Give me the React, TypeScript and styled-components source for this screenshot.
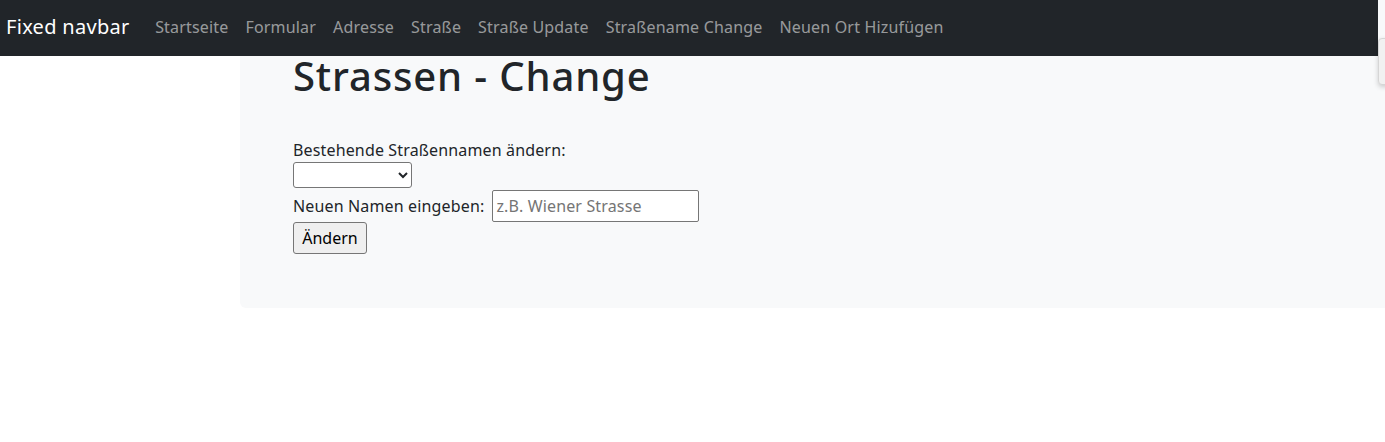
import React from "react";
import styled, { createGlobalStyle } from "styled-components";

const GlobalStyle = createGlobalStyle`
  html, body {
    margin: 0;
    padding: 0;
    overflow: hidden;
    background: #ffffff;
  }
  body {
    font-family: "Noto Sans", "Open Sans", sans-serif;
    font-size: 16px;
    line-height: 1.5;
    color: #212529;
  }
  *, *::before, *::after { box-sizing: border-box; }
`;

const Page = styled.div`
  position: relative;
  width: 1385px;
  height: 442px;
`;

const Navbar = styled.nav`
  position: fixed;
  top: 0;
  left: 0;
  right: 7px;
  height: 56px;
  z-index: 10;
  background: #212529;
  display: flex;
  align-items: center;
  padding: 6px 0 8px 6px;
`;

const Brand = styled.a`
  font-size: 20px;
  line-height: 30px;
  letter-spacing: 0.3px;
  padding: 5px 0;
  margin-right: 17px;
  color: #ffffff;
  text-decoration: none;
  white-space: nowrap;
`;

const NavList = styled.ul`
  display: flex;
  list-style: none;
  margin: 0;
  padding: 0;
`;

const NavLink = styled.a`
  display: block;
  padding: 8px 8.5px;
  line-height: 24px;
  letter-spacing: 0.18px;
  color: rgba(255, 255, 255, 0.55);
  text-decoration: none;
  white-space: nowrap;
`;

const Overlay = styled.div`
  position: fixed;
  left: 1378px;
  top: 38px;
  width: 40px;
  height: 47px;
  z-index: 20;
  background: #f1f1f1;
  border: 1px solid #d6d6d6;
  border-radius: 4px;
  box-shadow: 0 2px 5px rgba(0, 0, 0, 0.18);
`;

const Main = styled.main`
  padding-left: 240px;
`;

const Panel = styled.div`
  background: #f8f9fa;
  border-radius: 6px;
  margin-right: -20px;
  padding: 52px 0 54px 53px;
`;

const Title = styled.h1`
  margin: 0 0 38px 0;
  font-size: 40px;
  font-weight: 500;
  line-height: 48px;
  letter-spacing: 0.85px;
  color: #212529;
`;

const Form = styled.form`
  display: flex;
  flex-direction: column;
  align-items: flex-start;
`;

const Label = styled.label`
  display: block;
  line-height: 24px;
  letter-spacing: 0.15px;
`;

const Select = styled.select`
  width: 119px;
  height: 26px;
  margin: 0 0 2px 0;
  font-family: inherit;
  font-size: 16px;
  background: #ffffff;
  border: 1px solid #767676;
  border-radius: 3px;
  color: #212529;
`;

const InlineRow = styled.div`
  display: flex;
  align-items: center;
  gap: 8px;
`;

const TextInput = styled.input`
  width: 207px;
  height: 32px;
  padding: 1px 3px;
  font-family: inherit;
  font-size: 16px;
  line-height: 24px;
  letter-spacing: 0.15px;
  color: #212529;
  background: #ffffff;
  border: 1px solid #767676;
  border-radius: 2px;
  &::placeholder {
    color: #757575;
    opacity: 1;
  }
`;

const SubmitButton = styled.button`
  width: 74px;
  height: 32px;
  padding: 1px 6px;
  font-family: inherit;
  font-size: 16px;
  line-height: 24px;
  color: #000000;
  background: #efefef;
  border: 1px solid #767676;
  border-radius: 3px;
`;

const links = [
  "Startseite",
  "Formular",
  "Adresse",
  "Straße",
  "Straße Update",
  "Straßename Change",
  "Neuen Ort Hizufügen",
];

export default function App() {
  return (
    <Page>
      <GlobalStyle />
      <Navbar>
        <Brand href="#">Fixed navbar</Brand>
        <NavList>
          {links.map((l) => (
            <li key={l}>
              <NavLink href="#">{l}</NavLink>
            </li>
          ))}
        </NavList>
      </Navbar>
      <Overlay />
      <Main>
        <Panel>
          <Title>Strassen - Change</Title>
          <Form onSubmit={(e) => e.preventDefault()}>
            <Label htmlFor="strasse">Bestehende Straßennamen ändern:</Label>
            <Select id="strasse" defaultValue="">
              <option value=""></option>
            </Select>
            <InlineRow>
              <Label htmlFor="neu">Neuen Namen eingeben:</Label>
              <TextInput id="neu" type="text" placeholder="z.B. Wiener Strasse" />
            </InlineRow>
            <SubmitButton type="submit">Ändern</SubmitButton>
          </Form>
        </Panel>
      </Main>
    </Page>
  );
}
